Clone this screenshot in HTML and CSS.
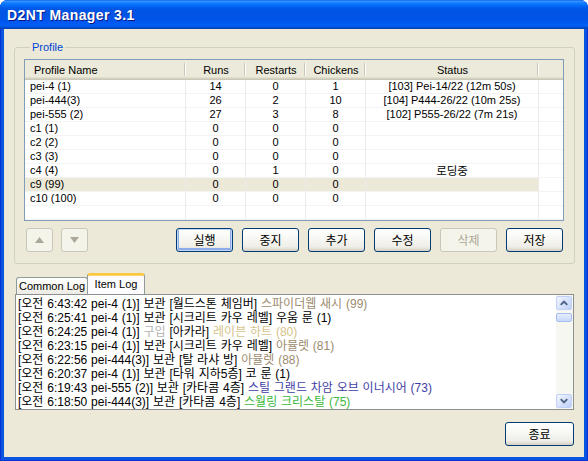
FILE: index.html
```html
<!DOCTYPE html>
<html>
<head>
<meta charset="utf-8">
<title>D2NT Manager 3.1</title>
<link rel="stylesheet" href="styles.css">
</head>
<body>
<div class="window">
  <div class="titlebar"><span class="title">D2NT Manager 3.1</span></div>
  <div class="client">
    <fieldset class="group">
      <legend>Profile</legend>
      <div class="list">
        <div class="lhead">
          <div class="hc c1 left">Profile Name</div>
          <div class="hc c2">Runs</div>
          <div class="hc c3">Restarts</div>
          <div class="hc c4">Chickens</div>
          <div class="hc c5">Status</div>
          <div class="hc c6"></div>
        </div>
        <div class="lbody">
          <div class="row"><div class="cell c1 left">pei-4 (1)</div><div class="cell c2">14</div><div class="cell c3">0</div><div class="cell c4">1</div><div class="cell c5">[103] Pei-14/22 (12m 50s)</div><div class="cell c6"></div></div>
          <div class="row"><div class="cell c1 left">pei-444(3)</div><div class="cell c2">26</div><div class="cell c3">2</div><div class="cell c4">10</div><div class="cell c5">[104] P444-26/22 (10m 25s)</div><div class="cell c6"></div></div>
          <div class="row"><div class="cell c1 left">pei-555 (2)</div><div class="cell c2">27</div><div class="cell c3">3</div><div class="cell c4">8</div><div class="cell c5">[102] P555-26/22 (7m 21s)</div><div class="cell c6"></div></div>
          <div class="row"><div class="cell c1 left">c1 (1)</div><div class="cell c2">0</div><div class="cell c3">0</div><div class="cell c4">0</div><div class="cell c5"></div><div class="cell c6"></div></div>
          <div class="row"><div class="cell c1 left">c2 (2)</div><div class="cell c2">0</div><div class="cell c3">0</div><div class="cell c4">0</div><div class="cell c5"></div><div class="cell c6"></div></div>
          <div class="row"><div class="cell c1 left">c3 (3)</div><div class="cell c2">0</div><div class="cell c3">0</div><div class="cell c4">0</div><div class="cell c5"></div><div class="cell c6"></div></div>
          <div class="row"><div class="cell c1 left">c4 (4)</div><div class="cell c2">0</div><div class="cell c3">1</div><div class="cell c4">0</div><div class="cell c5 ko">로딩중</div><div class="cell c6"></div></div>
          <div class="row sel"><div class="cell c1 left">c9 (99)</div><div class="cell c2">0</div><div class="cell c3">0</div><div class="cell c4">0</div><div class="cell c5"></div><div class="cell c6"></div></div>
          <div class="row"><div class="cell c1 left">c10 (100)</div><div class="cell c2">0</div><div class="cell c3">0</div><div class="cell c4">0</div><div class="cell c5"></div><div class="cell c6"></div></div>
          <div class="row"><div class="cell c1"></div><div class="cell c2"></div><div class="cell c3"></div><div class="cell c4"></div><div class="cell c5"></div><div class="cell c6"></div></div>
        </div>
      </div>
      <div class="btnrow">
        <div class="arrows">
          <button class="btn arrow" disabled><svg width="9" height="6" viewBox="0 0 9 6"><polygon points="0,6 4.5,0 9,6" fill="#aca899"/></svg></button>
          <button class="btn arrow" disabled><svg width="9" height="6" viewBox="0 0 9 6"><polygon points="0,0 9,0 4.5,6" fill="#aca899"/></svg></button>
        </div>
        <div class="actions">
          <button class="btn act default">실행</button>
          <button class="btn act">중지</button>
          <button class="btn act">추가</button>
          <button class="btn act">수정</button>
          <button class="btn act" disabled>삭제</button>
          <button class="btn act">저장</button>
        </div>
      </div>
    </fieldset>

    <div class="tabs">
      <div class="tab">Common Log</div>
      <div class="tab active">Item Log</div>
    </div>
    <div class="logbox">
      <div class="lines">
        <div class="line">[오전 6:43:42 pei-4 (1)] 보관 [월드스톤 체임버] <span class="tan">스파이더웹 새시 (99)</span></div>
        <div class="line">[오전 6:25:41 pei-4 (1)] 보관 [시크리트 카우 레벨] 우움 룬 (1)</div>
        <div class="line">[오전 6:24:25 pei-4 (1)] <span class="gray">구입</span> [아카라] <span class="gold">레이븐 하트 (80)</span></div>
        <div class="line">[오전 6:23:15 pei-4 (1)] 보관 [시크리트 카우 레벨] <span class="tan">아뮬렛 (81)</span></div>
        <div class="line">[오전 6:22:56 pei-444(3)] 보관 [탈 라샤 방] <span class="tan">아뮬렛 (88)</span></div>
        <div class="line">[오전 6:20:37 pei-4 (1)] 보관 [타워 지하5층] 코 룬 (1)</div>
        <div class="line">[오전 6:19:43 pei-555 (2)] 보관 [카타콤 4층] <span class="blue">스틸 그랜드 차암 오브 이너시어 (73)</span></div>
        <div class="line">[오전 6:18:50 pei-444(3)] 보관 [카타콤 4층] <span class="green">스월링 크리스탈 (75)</span></div>
      </div>
      <div class="scroll">
        <div class="sbtn"><svg width="15" height="14" viewBox="0 0 15 14"><polyline points="4,9 7.5,5.5 11,9" fill="none" stroke="#4d6185" stroke-width="2"/></svg></div>
        <div class="thumb"></div>
        <div class="track"></div>
        <div class="sbtn"><svg width="15" height="14" viewBox="0 0 15 14"><polyline points="4,5 7.5,8.5 11,5" fill="none" stroke="#4d6185" stroke-width="2"/></svg></div>
      </div>
    </div>
    <div class="footer">
      <button class="btn close">종료</button>
    </div>
  </div>
</div>
</body>
</html>
```
FILE: styles.css
```css
html, body {
  margin: 0;
  padding: 0;
  background: #ffffff;
}
body {
  width: 588px;
  height: 461px;
  overflow: hidden;
  font-family: "Liberation Sans", "Noto Sans CJK KR", sans-serif;
  font-size: 11px;
  color: #000;
}
.window {
  width: 588px;
  height: 461px;
  display: flex;
  flex-direction: column;
  background: #0a55df;
  border-radius: 8px 8px 0 0;
  overflow: hidden;
  box-shadow: inset 1px 0 #0831d9, inset -1px 0 #0831d9, inset 0 -1px #0831d9;
}
.titlebar {
  height: 29px;
  flex: none;
  background: linear-gradient(180deg,
    #0058ee 0px, #3a93ff 1px, #288eff 2px, #127dff 3px, #036ffc 5px,
    #0262ee 7px, #0057e5 9px, #0054e3 13px, #0055eb 21px, #005bf5 24px,
    #0260f3 26px, #0050d8 27px, #003fae 29px);
  display: flex;
  align-items: center;
  padding-left: 7px;
}
.title {
  font-family: "Liberation Sans", sans-serif;
  font-weight: bold;
  font-size: 14px;
  letter-spacing: 0.4px;
  color: #ffffff;
  text-shadow: 1px 1px 0 #0a1883;
  line-height: 16px;
  margin-top: 1px;
}
.client {
  flex: 1;
  margin: 0 4px 4px 4px;
  background: #ece9d8;
  display: flex;
  flex-direction: column;
}

/* group box */
.group {
  margin: 12px 9px 0 10px;
  padding: 5px 10px 11px 9px;
  border: 1px solid #d0d0bf;
  border-radius: 3px;
  min-width: 0;
}
.group legend {
  padding: 0 2px;
  margin-left: 6px;
  font-size: 11px;
  line-height: 13px;
  color: #0046d5;
}

/* list view */
.list {
  width: 540px;
  height: 162px;
  box-sizing: border-box;
  border: 1px solid #7f9db9;
  background: #ffffff;
  display: flex;
  flex-direction: column;
}
.lhead {
  display: flex;
  height: 20px;
  flex: none;
  background: linear-gradient(180deg, #ebeadb 0, #ebeadb 17px, #e2decd 17px, #e2decd 18px, #d6d2c2 18px, #d6d2c2 19px, #cbc7b8 19px);
}
.hc {
  box-sizing: border-box;
  height: 20px;
  line-height: 20px;
  text-align: center;
  white-space: nowrap;
  background:
    linear-gradient(#cbc7b8, #cbc7b8) right 1px top 3px / 1px 13px no-repeat,
    linear-gradient(#ffffff, #ffffff) right 0 top 3px / 1px 13px no-repeat;
}
.hc.c6 { background: none; }
.hc.left { text-align: left; padding-left: 9px; }
.c1 { width: 161px; flex: none; }
.c2, .c3, .c4 { width: 60px; flex: none; }
.c5 { width: 173px; flex: none; }
.c6 { flex: 1; }
.lbody {
  flex: 1;
  display: flex;
  flex-direction: column;
}
.row {
  display: flex;
  height: 14px;
}
.cell {
  box-sizing: border-box;
  height: 14px;
  line-height: 13px;
  text-align: center;
  white-space: nowrap;
  overflow: hidden;
  border-right: 1px solid #ebebeb;
  border-bottom: 1px solid #f3f3f3;
}
.cell.c6 { border-right: none; }
.cell.left { text-align: left; padding-left: 5px; }
.cell.ko {
  font-family: "Noto Sans CJK KR", sans-serif;
  font-size: 11.5px;
  line-height: 13px;
  overflow: visible;
}
.row.sel .c1, .row.sel .c2, .row.sel .c3, .row.sel .c4, .row.sel .c5 {
  background: #ece9d8;
}

/* buttons */
.btnrow {
  display: flex;
  justify-content: space-between;
  margin-top: 7px;
  width: 540px;
}
.arrows {
  display: flex;
  gap: 8px;
  margin-left: 2px;
}
.actions {
  display: flex;
  gap: 9px;
  margin-right: 1px;
}
.btn {
  box-sizing: border-box;
  height: 24px;
  padding: 0;
  border: 1px solid #003c74;
  border-radius: 3px;
  background: linear-gradient(180deg, #ffffff 0%, #f7f7f3 45%, #efeee8 80%, #d6d0c5 100%);
  font-family: "Noto Sans CJK KR", sans-serif;
  font-size: 12px;
  line-height: 20px;
  color: #000;
  display: flex;
  align-items: center;
  justify-content: center;
}
.btn.act { width: 57px; }
.btn.default {
  box-shadow: inset 0 0 0 1px #c4d6f6, inset 0 -1px 0 2px #8bace8;
}
.btn:disabled {
  border-color: #c9c7ba;
  background: #f5f4ea;
  color: #aca899;
}
.btn.arrow { width: 27px; }
.btn.close { width: 69px; }

/* tabs */
.tabs {
  display: flex;
  align-items: flex-end;
  height: 21px;
  margin: 9px 0 0 12px;
}
.tab {
  box-sizing: border-box;
  height: 17px;
  width: 72px;
  border: 1px solid #919b9c;
  border-bottom: none;
  border-radius: 3px 3px 0 0;
  background: linear-gradient(180deg, #ffffff 0%, #f6f5f1 50%, #ecebe5 100%);
  text-align: center;
  line-height: 17px;
  font-size: 11px;
  white-space: nowrap;
}
.tab.active {
  height: 21px;
  width: 58px;
  margin-left: -1px;
  background: #fcfcfe;
  border-top: 2px solid #ffc83c;
  box-shadow: inset 0 1px 0 #f8d37a;
  line-height: 18px;
}

/* log box */
.logbox {
  box-sizing: border-box;
  height: 116px;
  margin: 0 10px 0 11px;
  border: 1px solid #8c9091;
  background: #ffffff;
  display: flex;
}
.lines {
  flex: 1;
  padding: 2px 0 0 2px;
  overflow: hidden;
  font-family: "Liberation Sans", "Noto Sans CJK KR", sans-serif;
  font-size: 12px;
  word-spacing: 0.5px;
}
.line {
  height: 14px;
  line-height: 14px;
  white-space: nowrap;
}
.tan { color: #9c8c6e; }
.gray { color: #b4b4b4; }
.gold { color: #d4c38a; }
.blue { color: #3e3ea4; }
.green { color: #3cb83c; }

.scroll {
  width: 17px;
  flex: none;
  display: flex;
  flex-direction: column;
  background: #f7f7f2;
  padding: 1px 1px 1px 0;
  box-sizing: border-box;
}
.sbtn {
  height: 14px;
  flex: none;
  box-sizing: border-box;
  border: 1px solid #c0d0f6;
  border-radius: 2px;
  background: linear-gradient(135deg, #f2f6fe 0%, #d8e3fc 50%, #bfd0f8 100%);
  display: flex;
  align-items: center;
  justify-content: center;
}
.sbtn svg { display: block; }
.thumb {
  height: 9px;
  flex: none;
  margin-top: 3px;
  box-sizing: border-box;
  border: 1px solid #a8bdf0;
  border-radius: 2px;
  background: linear-gradient(180deg, #e6eefc 0%, #c9d8fa 100%);
}
.track { flex: 1; }

.footer {
  display: flex;
  justify-content: flex-end;
  margin: 12px 10px 0 0;
}
```
